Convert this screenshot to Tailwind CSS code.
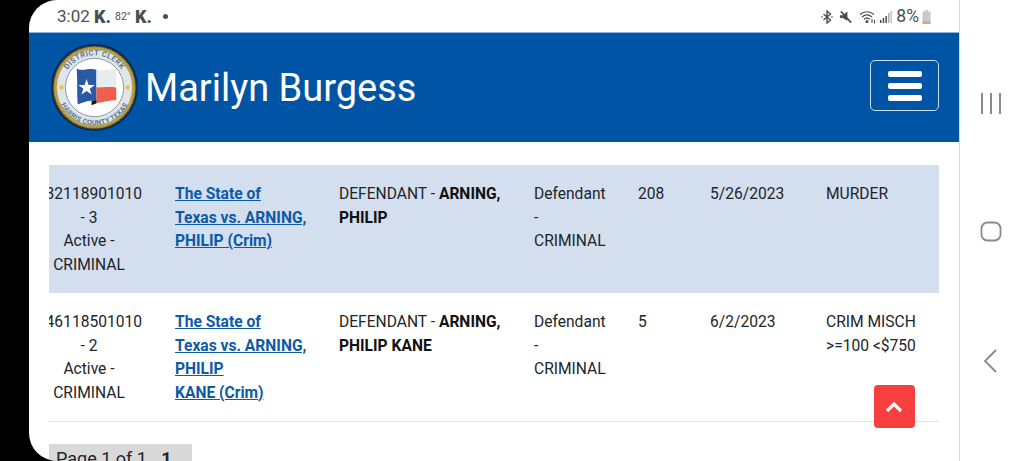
<!DOCTYPE html>
<html lang="en">

<head>
    <meta charset="UTF-8">
    <meta name="viewport" content="width=device-width, initial-scale=1.0">
    <title>Marilyn Burgess</title>
    <script src="https://cdn.jsdelivr.net/npm/@tailwindcss/browser@4"></script>
</head>

<body class="h-[461px] w-[1024px] overflow-hidden bg-black flex font-['Roboto',sans-serif] text-[15.6px] leading-[23.5px] text-[#212529]">
<div class="w-[29px] shrink-0"></div>

<div class="relative w-[930px] h-[461px] shrink-0 bg-white rounded-l-[28px] overflow-hidden flex flex-col">
    <!-- status bar -->
    <div class="h-[32px] shrink-0 pl-[28px] pr-[28px] pt-[1px] flex items-center justify-between text-[#4b4f52]">
        <div class="flex items-center">
            <span class="text-[17px] w-[37px]">3:02</span>
            <span class="text-[18px] font-black w-[21px]">K.</span>
            <span class="text-[10.5px] w-[20px]">82°</span>
            <span class="text-[18px] font-black w-[28px]">K.</span>
            <span class="w-[5px] h-[5px] rounded-full bg-[#4b4f52]"></span>
        </div>
        <div class="flex items-center">
            <svg class="w-[12px] h-[14px]" viewBox="0 0 12 14" fill="none" stroke="#4b4f52" stroke-width="1.4">
                <path d="M2.500 4l7 6-3.500 3V1l3.500 3-7 6"/>
                <circle cx="1" cy="7" r=".8" fill="#4b4f52" stroke="none"/>
                <circle cx="11" cy="7" r=".8" fill="#4b4f52" stroke="none"/>
            </svg>
            <svg class="w-[14px] h-[14px] ml-[6px]" viewBox="0 0 15 14" fill="#4b4f52">
                <path d="M1 5h3l5-4v10l-5-3H1z"/>
                <path d="M2 1l11 12" stroke="#4b4f52" stroke-width="1.800"/>
            </svg>
            <svg class="w-[18px] h-[14px] ml-[6px]" viewBox="0 0 18 14" fill="none" stroke="#4b4f52" stroke-width="1.100">
                <path d="M1 4.500C5 .8 11 .8 15 4.500"/>
                <path d="M3 7c3-2.600 7-2.600 10 0"/>
                <path d="M5 9.300c2-1.500 4-1.500 6 0"/>
                <circle cx="8" cy="11.500" r="1" fill="#4b4f52"/>
                <path d="M13 9v4M15.500 10v3.500"/>
            </svg>
            <svg class="w-[12px] h-[14px] ml-[3px]" viewBox="0 0 12 14" fill="#4b4f52">
                <rect x="0" y="10" width="1.500" height="3"/>
                <rect x="2.700" y="8" width="1.500" height="5"/>
                <rect x="5.400" y="6" width="1.500" height="7"/>
                <rect x="8.100" y="3" width="1.500" height="10" fill="#a9abad"/>
                <rect x="10.500" y="1" width="1.500" height="12" fill="#c4c6c7"/>
            </svg>
            <span class="text-[17.5px] leading-none ml-[4px]">8%</span>
            <svg class="w-[9px] h-[14px] ml-[3px]" viewBox="0 0 9 14">
                <path d="M3 0h3v1.500h2.500v12.500H.5V1.500H3z" fill="#c9c9c9"/>
                <rect x=".5" y="11" width="8" height="3" fill="#e2a48f"/>
            </svg>
        </div>
    </div>

    <!-- site header -->
    <header class="h-[110px] shrink-0 bg-[#0054a6] border-t border-[#8fb6d8] flex items-center justify-between pl-[22px] pr-[20px]">
        <div class="flex items-center gap-[7px]">
            <svg class="w-[87px] h-[87px]" viewBox="0 0 88 88">
                <defs>
                    <path id="arcTop" d="M11.500 44a32.500 32.500 0 0 1 65 0"/>
                    <path id="arcBottom" d="M6 44a38 38 0 0 0 76 0"/>
                </defs>
                <circle cx="44" cy="44" r="44" fill="#0f2747"/>
                <circle cx="44" cy="44" r="41.500" fill="#b7a04a"/>
                <circle cx="44" cy="44" r="41.500" fill="none" stroke="#6f6430" stroke-width="2" stroke-dasharray="1 1.500"/>
                <circle cx="44" cy="44" r="38" fill="#dfe5ea"/>
                <circle cx="44" cy="44" r="29.500" fill="#fff" stroke="#8597a8"/>
                <text font-family="Roboto, sans-serif" font-size="7.500" font-weight="700" fill="#5a7694" letter-spacing=".5"><textPath href="#arcTop" startOffset="50%" text-anchor="middle">DISTRICT CLERK</textPath></text>
                <text font-family="Roboto, sans-serif" font-size="7" font-weight="700" fill="#5a7694" letter-spacing=".3"><textPath href="#arcBottom" startOffset="50%" text-anchor="middle">HARRIS COUNTY TEXAS</textPath></text>
                <circle cx="10.500" cy="44" r="2.200" fill="#e5c34e"/>
                <circle cx="77.500" cy="44" r="2.200" fill="#e5c34e"/>
                <path d="M26 25c7 3 12-1 20 1v32c-7-2-13 1-19 3-1-12 0-24-1-36z" fill="#2a5aa3"/>
                <path d="M46 26c7 2 13-1 20-1v19c-7-1-13 0-20 0z" fill="#e9ecee"/>
                <path d="M46 44c7 0 13-1 20 0v13c-7 0-13 2-20 3z" fill="#ee5f4e"/>
                <path d="M41 62l5-2v-3l-5 1z" fill="#111"/>
                <path d="M36 35.500l2 6h6.300l-5.100 3.700 2 6-5.200-3.700-5.200 3.700 2-6-5.100-3.700H34z" fill="#fff"/>
            </svg>
            <span class="text-[38px] leading-none text-white">Marilyn Burgess</span>
        </div>
        <button class="w-[69px] h-[51px] mb-[4px] border-[1.5px] border-[#cfe2f3] rounded-[5px] flex flex-col items-center justify-center gap-[6px]">
            <span class="block w-[34px] h-[6px] rounded-[2px] bg-white"></span>
            <span class="block w-[34px] h-[6px] rounded-[2px] bg-white"></span>
            <span class="block w-[34px] h-[6px] rounded-[2px] bg-white"></span>
        </button>
    </header>

    <!-- results -->
    <main class="px-[20px] pt-[23px]">
        <div class="grid grid-cols-[126px_164px_195px_104px_73px_115px_113px] h-[128px] pt-[18px] bg-[#d3deee]">
            <div class="overflow-hidden">
                <div class="w-[93px] overflow-hidden whitespace-nowrap flex justify-end">32118901010</div>
                <div class="w-[80px] text-center">- 3<br>Active -<br>CRIMINAL</div>
            </div>
            <a href="#" class="font-bold text-[#0d5aa7] underline self-start">The State of<br>Texas vs. ARNING,<br>PHILIP (Crim)</a>
            <div class="w-[170px]">DEFENDANT - <b class="text-[#111]">ARNING, PHILIP</b></div>
            <div class="w-[80px]">Defendant<br>-<br>CRIMINAL</div>
            <div>208</div>
            <div class="-ml-[1px]">5/26/2023</div>
            <div>MURDER</div>
        </div>
        <div class="grid grid-cols-[126px_164px_195px_104px_73px_115px_113px] h-[129px] pt-[18px] border-b border-[#dee2e6]">
            <div class="overflow-hidden">
                <div class="w-[93px] overflow-hidden whitespace-nowrap flex justify-end">46118501010</div>
                <div class="w-[80px] text-center">- 2<br>Active -<br>CRIMINAL</div>
            </div>
            <a href="#" class="font-bold text-[#0d5aa7] underline self-start">The State of<br>Texas vs. ARNING,<br>PHILIP<br>KANE (Crim)</a>
            <div class="w-[170px]">DEFENDANT - <b class="text-[#111]">ARNING, PHILIP KANE</b></div>
            <div class="w-[80px]">Defendant<br>-<br>CRIMINAL</div>
            <div>5</div>
            <div class="-ml-[1px]">6/2/2023</div>
            <div>CRIM MISCH<br>&gt;=100 &lt;$750</div>
        </div>
        <div class="mt-[22px] w-[143px] h-[40px] bg-[#d9d9d9] px-[7px] pt-[3px] text-[18px] leading-[24px] whitespace-nowrap">Page 1 of 1 <b class="ml-[10px]">1</b></div>
    </main>

    <button class="absolute left-[844.500px] top-[385px] w-[41.500px] h-[43px] bg-[#f83f3f] rounded-[4px] flex items-center justify-center">
        <svg class="w-[18px] h-[12px]" viewBox="0 0 18 12" fill="none" stroke="#fff" stroke-width="3.200">
            <path d="M2 10l7-7 7 7"/>
        </svg>
    </button>
</div>

<!-- android nav bar -->
<nav class="flex-1 bg-white border-l border-[#d9d9d9] flex flex-col items-center pt-[92px] pr-[2px]">
    <svg class="w-[22px] h-[22px]" viewBox="0 0 22 22" stroke="#8a8a8a" stroke-width="2">
        <path d="M2 1v21M11 1v21M20 1v21"/>
    </svg>
    <svg class="w-[22px] h-[22px] mt-[107px]" viewBox="0 0 22 22" fill="none" stroke="#8a8a8a" stroke-width="1.800">
        <rect x="1.500" y="1.500" width="19" height="18" rx="6"/>
    </svg>
    <svg class="w-[16px] h-[24px] mt-[106px] mr-[2px]" viewBox="0 0 16 24" fill="none" stroke="#8a8a8a" stroke-width="1.800">
        <path d="M14 1L3 12l11 11"/>
    </svg>
</nav>
</body>

</html>
